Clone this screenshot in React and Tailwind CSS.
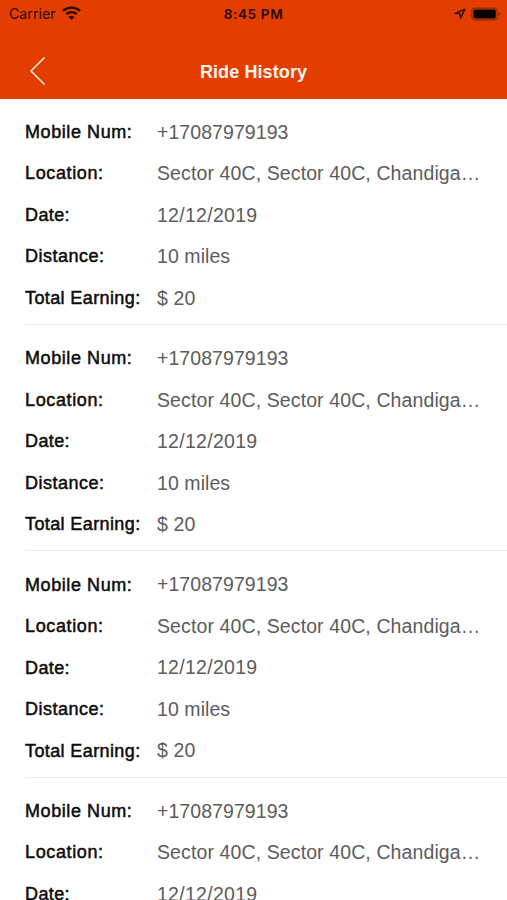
const fields = [
  ["Mobile Num:", "+17087979193", "tracking-[0.58px]", "tracking-[0.07px]"],
  ["Location:", "Sector 40C, Sector 40C, Chandiga…", "tracking-[0.62px]", "tracking-[0.11px]"],
  ["Date:", "12/12/2019", "tracking-[0.4px]", "tracking-[0.28px]"],
  ["Distance:", "10 miles", "tracking-[0.5px]", "tracking-[0.07px]"],
  ["Total Earning:", "$ 20", "tracking-[0.39px]", "tracking-[0.14px]"],
];

function StatusBar() {
  return (
    <div className="grid h-[28px] grid-cols-3 items-center pl-[9px] pr-[5px] text-[#260b00]">
      <div className="flex items-center gap-[7px]">
        <span className="font-['Inter',sans-serif] text-[14.2px] leading-[28px]">Carrier</span>
        <svg width="19" height="14" viewBox="0 0 18 14" preserveAspectRatio="none" className="-ml-[1px] -mt-[2px]" fill="none" stroke="currentColor" strokeWidth="2.3">
          <path d="M.9 4.9C5.4.4 12.6.4 17.1 4.9" />
          <path d="M4 8.1c2.800-2.700 7.200-2.700 10 0" />
          <path d="M9 13.7 6.200 10.900c1.500-1.500 4.100-1.500 5.600 0Z" fill="currentColor" stroke="none" />
        </svg>
      </div>
      <span className="-ml-[4px] text-center font-['Inter',sans-serif] text-[13.5px] font-semibold leading-[28px] tracking-[0.65px]">8:45 PM</span>
      <div className="flex items-center justify-end gap-[5px]">
        <svg width="12" height="12" viewBox="0 0 12 12" fill="none" stroke="currentColor" strokeWidth="1.4" strokeLinejoin="round">
          <path d="M10.800 1.300 1 5.400l4.800.3.8 4.600Z" />
        </svg>
        <svg width="31" height="14" viewBox="0 0 31 14">
          <rect x=".8" y="1.1" width="25.4" height="11.8" rx="3" fill="none" stroke="#8c2800" strokeWidth="1.1" />
          <rect x="2.3" y="2.6" width="22.4" height="8.8" rx="1.6" fill="#080100" />
          <path d="M27.7 5c2 .6 2 3.400 0 4Z" fill="#8c2800" />
        </svg>
      </div>
    </div>
  );
}

function Ride() {
  return (
    <section className="ml-[25px] h-[226.4px] border-b-[1.5px] border-[#ececec] pt-[13px]">
      {fields.map(([label, value, labelTracking, valueTracking]) => (
        <div key={label} className="flex h-[41.5px] items-center whitespace-nowrap">
          <span className={`w-[132px] text-[18px] text-[#0c0c0c] [-webkit-text-stroke:0.5px_#0c0c0c] ${labelTracking}`}>{label}</span>
          <span className={`text-[19.5px] text-[#5c5c5c] ${valueTracking}`}>{value}</span>
        </div>
      ))}
    </section>
  );
}

export default function App() {
  return (
    <main className="h-[900px] w-[507px] overflow-hidden bg-white font-['Liberation_Sans',sans-serif]">
      <header className="h-[98.5px] bg-[#e33e00]">
        <StatusBar />
        <div className="grid h-[70px] grid-cols-3 items-center">
          <svg width="18" height="30" viewBox="0 0 18 30" className="ml-[29px] mt-[16px]" fill="none" stroke="#ffe6d8" strokeWidth="1.6">
            <path d="M15.500 1.500 2 15 15.500 28.500" />
          </svg>
          <h1 className="mt-[18px] whitespace-nowrap text-center text-[18px] font-bold tracking-[0.1px] text-[#fff3ec]">Ride History</h1>
        </div>
      </header>
      <Ride />
      <Ride />
      <Ride />
      <Ride />
    </main>
  );
}
